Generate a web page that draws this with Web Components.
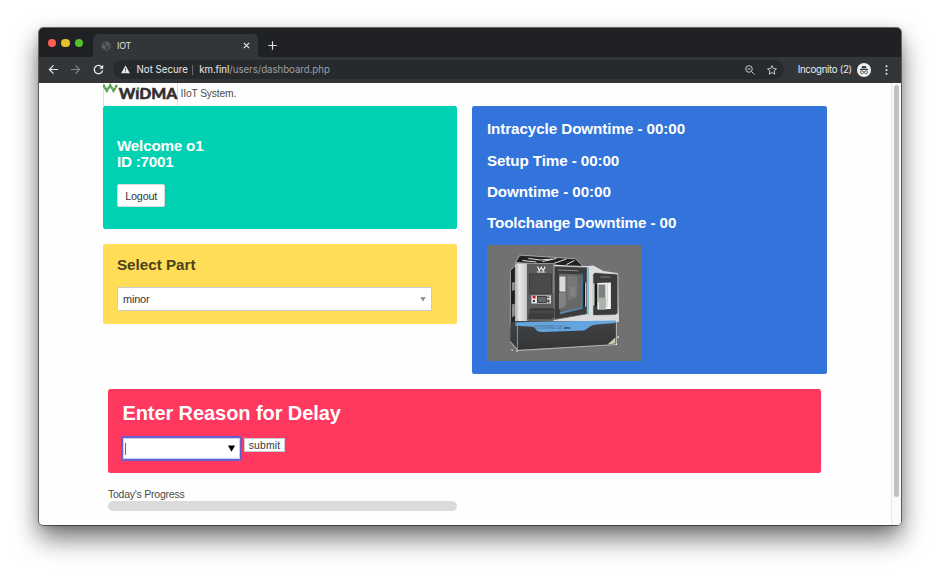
<!DOCTYPE html>
<html lang="en">
<head>
<meta charset="utf-8">
<title>IOT</title>
<style>
html,body{margin:0;height:100%;background:#fff;overflow:hidden}
body{font-family:"Liberation Sans",Arial,sans-serif;color:#4a4a4a}
</style>
</head>
<body>
<browser-window>
  <browser-tabs slot="chrome"></browser-tabs>
  <browser-toolbar slot="chrome"></browser-toolbar>
  <iot-dashboard></iot-dashboard>
</browser-window>
<script>
const define = (name, html, setup) => customElements.define(name, class extends HTMLElement {
  connectedCallback() {
    if (this.shadowRoot) return;
    const t = document.createElement('template');
    t.innerHTML = html;
    this.attachShadow({mode: 'open'}).appendChild(t.content.cloneNode(true));
    if (setup) setup(this);
  }
});

/* Single line of text tracked out or in to fill the width given in "w". */
define('fit-text', `<style>:host{display:block;white-space:nowrap;line-height:inherit}span{display:inline-block}</style><span><slot></slot></span>`, el => {
  const s = el.shadowRoot.querySelector('span');
  const fit = () => {
    const n = el.textContent.length, w = +el.getAttribute('w');
    s.style.letterSpacing = '0';
    s.style.letterSpacing = ((w - s.getBoundingClientRect().width) / n) + 'px';
  };
  fit();
  addEventListener('load', fit);
});

define('browser-window', `<style>
:host{display:flex;flex-direction:column;box-sizing:border-box;width:862.5px;height:497px;margin:28px 0 0 38.6px;border-radius:4px;overflow:hidden;background:#fefefe;
box-shadow:0 0 0 .7px rgba(25,25,25,.8),0 13px 26px rgba(0,0,0,.56),0 2px 10px rgba(0,0,0,.14)}
.view{flex:1;display:flex;min-height:0}
.page{flex:1}
.bar{width:10px;background:#fafafa;border-left:1px solid #e6e6e6;box-sizing:border-box;padding:2px 2px 0 2px}
.thumb{width:5px;height:412px;border-radius:3px;background:#c1c1c1}
</style><slot name="chrome"></slot><div class="view"><div class="page"><slot></slot></div><div class="bar"><div class="thumb"></div></div></div>`);

define('browser-tabs', `<style>
:host{display:flex;height:29px;background:#202124;font:9px Inter,Roboto,sans-serif;color:#dfe1e5;flex:none}
.dots{display:flex;gap:5.2px;padding:11px 0 0 9px;width:45px;box-sizing:border-box;flex:none}
.dots i{width:8.4px;height:8.4px;border-radius:50%;flex:none}
.tab{display:flex;align-items:center;width:165px;height:23px;margin:6px 0 0 9px;background:#323639;border-radius:5px 5px 0 0;box-sizing:border-box;padding:0 7px 0 8px}
.tab fit-text{margin-left:6.5px;flex:1}
svg{flex:none}
.tab>svg:last-child{margin-right:1px}
.plus{margin:12.5px 0 0 10.5px}
</style><div class="dots"><i style="background:#ff5f57"></i><i style="background:#e9bf2b"></i><i style="background:#54c22b"></i></div>
<div class="tab"><svg width="10" height="10" viewBox="0 0 10 10"><circle cx="5" cy="5" r="4.3" fill="#3d4144" stroke="#55595c" stroke-width=".9"/><path d="M1 3.5L3.5 4.2 4.8 6 4 8.8 2.8 7.2 1.2 6zM5 1l2.2.3L8.7 3.5 7.6 5 5.8 4.4 5 3zM7 6.3l1.5-.2L7 8.5z" fill="#5d6164"/></svg>
<fit-text w="13.8">IOT</fit-text>
<svg width="7" height="7" viewBox="0 0 7 7"><path d="M.8.8l5.4 5.4M6.2.8L.8 6.2" stroke="#e1e3e5" stroke-width="1.2"/></svg></div>
<svg class="plus" width="9" height="9" viewBox="0 0 9 9"><path d="M4.5.3v8.4M.3 4.5h8.4" stroke="#dfe1e5" stroke-width="1.2"/></svg>`);

define('browser-toolbar', `<style>
:host{display:flex;align-items:center;height:25.5px;background:#323639;font:9.7px Inter,Roboto,sans-serif;color:#e8eaed;flex:none;box-sizing:border-box;padding-left:9.6px}
svg{flex:none}
.url{display:flex;align-items:center;height:19px;width:670.9px;box-sizing:border-box;border-radius:10px;background:#272a2d;margin-left:9.6px;padding:0 7px 0 8px}
.sep{width:1px;height:10px;background:#686c70;margin:0 6px 0 4.5px}
.dim{color:#9aa0a6}.grow{flex:1}
</style>
<svg width="11" height="11" viewBox="0 0 11 11"><path d="M10 5.5H1.4M5.5 1.4L1.4 5.5l4.1 4.1" fill="none" stroke="#e8eaed" stroke-width="1.2"/></svg>
<svg style="margin-left:11px" width="11" height="11" viewBox="0 0 11 11"><path d="M1 5.5h8.6M5.5 1.4l4.1 4.1-4.1 4.1" fill="none" stroke="#85898c" stroke-width="1.1"/></svg>
<svg style="margin-left:11.5px" width="11" height="11" viewBox="0 0 11 11"><path d="M9 3.2A4.2 4.2 0 1 0 9.6 6.3" fill="none" stroke="#e8eaed" stroke-width="1.3"/><path d="M10.2.8v4H6.3z" fill="#e8eaed"/></svg>
<div class="url">
<svg width="9" height="9" viewBox="0 0 9 9"><path d="M4.5.6L8.9 8.3H.1z" fill="#e8eaed"/><path d="M4.5 3.2v2.5M4.5 6.3v1" stroke="#292c2f" stroke-width=".8"/></svg>
<fit-text w="51.2" style="margin-left:6.3px">Not Secure</fit-text><span class="sep"></span><fit-text w="30">km.finl</fit-text><fit-text w="100.5" class="dim">/users/dashboard.php</fit-text><span class="grow"></span>
<svg width="10" height="10" viewBox="0 0 10 10"><circle cx="4" cy="4" r="3.3" fill="none" stroke="#c2c5c8"/><path d="M2.4 4h3.2M6.4 6.4l3.2 3.2" stroke="#c2c5c8"/></svg>
<svg style="margin-left:12px" width="10" height="10" viewBox="0 0 10 10"><path d="M5 .6l1.3 3 3.2.3-2.4 2.1.7 3.2L5 7.5 2.2 9.2l.7-3.2L.5 3.9l3.2-.3z" fill="none" stroke="#d4d6d8" stroke-width=".9"/></svg>
</div>
<fit-text w="54" style="margin-left:13.5px">Incognito (2)</fit-text>
<svg style="margin-left:5.5px" width="14" height="14" viewBox="0 0 14 14"><circle cx="7" cy="7" r="7" fill="#f1f3f4"/><path d="M5 2.9h4l.7 2.6H4.3zM2.8 6.1h8.4v.9H2.8z" fill="#3c4043"/><g fill="none" stroke="#3c4043" stroke-width=".8"><circle cx="4.9" cy="9.2" r="1.5"/><circle cx="9.1" cy="9.2" r="1.5"/><path d="M6.4 8.9q.6-.4 1.2 0"/></g></svg>
<svg style="margin-left:13.5px" width="3" height="10" viewBox="0 0 3 10"><circle cx="1.5" cy="1.3" r="1.05" fill="#e8eaed"/><circle cx="1.5" cy="5" r="1.05" fill="#e8eaed"/><circle cx="1.5" cy="8.7" r="1.05" fill="#e8eaed"/></svg>`);

define('widma-logo', `<style>:host{display:block;width:75px;height:23px;border:1px solid #dedede;border-width:0 1px;box-sizing:border-box}svg{display:block;margin-left:-1px}</style>
<svg width="75" height="23" viewBox="0 0 75 23"><g fill="none" stroke="#519b4b"><path d="M.4 1.8L3.8 7.8 7.2 2.2 10.6 7.8 14 1.8" stroke-width="2.3" stroke-dasharray="2.6 .35"/></g>
<text x="15.8" y="16.2" textLength="58.6" lengthAdjust="spacingAndGlyphs" font-family="Lato,sans-serif" font-weight="900" font-size="15.2" fill="#332f30" stroke="#332f30" stroke-width=".5">WiDMA</text><rect x="32.4" y="3.2" width="5.4" height="3.8" fill="#fefefe"/><circle cx="35" cy="5.4" r="1.5" fill="#55a94d"/></svg>`);

define('note-card', `<style>:host{display:block;border-radius:2.5px;box-sizing:border-box;padding:0 14.4px;color:#fff}</style><slot></slot>`);

define('part-select', `<style>:host{display:flex;align-items:center;box-sizing:border-box;width:315.5px;height:24px;background:#fff;border:1px solid #ccc;padding:1px 5px;font-size:10.9px;line-height:14px;color:#333}fit-text{flex:1}</style>
<fit-text w="26.5"></fit-text><svg width="6" height="5" viewBox="0 0 6 5"><path d="M.3.3h5.4L3 4.6z" fill="#888"/></svg>`, el => {
  el.shadowRoot.querySelector('fit-text').textContent = el.getAttribute('value');
});

define('reason-input', `<style>:host{display:flex;align-items:center;box-sizing:border-box;width:121px;height:25px;background:#fff;border:2px solid #6b5fce;border-radius:2px;box-shadow:inset 0 0 0 1px #c4d2f5;padding:1px 5px 0 1.5px;justify-content:space-between}i{width:1px;height:12px;background:#666}</style>
<i></i><svg width="7" height="7" viewBox="0 0 7 7"><path d="M0 .6h7L3.5 6.7z" fill="#000"/></svg>`);

define('cnc-machine', `<style>:host{display:block;width:154.5px;height:116px}svg{display:block}</style>
<svg width="154.5" height="116" viewBox="6.6 5.5 154.5 116" preserveAspectRatio="none">
<defs><linearGradient id="w"><stop stop-color="#a9abac"/><stop offset=".35" stop-color="#e7e8e8"/><stop offset="1" stop-color="#c5c6c7"/></linearGradient>
<linearGradient id="b" x2="0" y2="1"><stop stop-color="#414243"/><stop offset="1" stop-color="#343536"/></linearGradient></defs>
<rect x="6" y="5" width="157" height="118" fill="#717171"/>
<path d="M35 23L39.5 15.7 95 19.3l8 7.7L98 28 72 25z" fill="#202122" stroke="#ddd" stroke-width=".6"/>
<path d="M48 19l12 1.5 12-1M62 22l14-3M73 24l13-4.5M86 25l8-4M42 21l14 1.5" fill="none" stroke="#e2e2e2" stroke-width="1"/>
<path d="M30 31l8-8v60L30 88z" fill="#1e1f20" stroke="#c4c4c4" stroke-width=".7"/><path d="M31.5 43l3-.5v8l-3 1zM31.5 65l3-1v12l-3 2z" fill="#8b8c8d"/>
<path d="M34.5 24H47v58H34.5z" fill="url(#w)"/>
<path d="M73 26l34 1 6-.5 10 5.5 14 2 1 48-65 1z" fill="#ddddde" stroke="#eee" stroke-width=".8"/>
<path d="M46.5 23.5h27V81h-27z" fill="#5c5d5e"/><path d="M46 24h27M73.5 24v30" stroke="#aaa" stroke-width=".7"/>
<path d="M74 27l32.5 1v46.5L74 80z" fill="#3a3b3c" stroke="#666" stroke-width=".7"/>
<path d="M78.5 34l22.5 1v34l-21 6z" fill="#666869"/><path d="M79 37h6v15h-6z" fill="#dadada"/><path d="M87 36l10 1v20l-10 5z" fill="#777"/><path d="M78.5 53h7v13l-7 4zM90 47h5v10h-5z" fill="#828282"/>
<path d="M100.5 34q1.2 0 1.2 2l-.2 33-22 4.5" fill="none" stroke="#489de0" stroke-width="1"/>
<path d="M103.3 43h1.8v23h-1.8z" fill="#111"/><path d="M105.3 43v24" stroke="#eee" stroke-width="1"/>
<path d="M107.8 28v48" stroke="#57acc0" stroke-width="1"/>
<rect x="49" y="34.5" width="22" height="19.5" fill="#494a4b" stroke="#303132" stroke-width=".6"/>
<path d="M57.2 27l1.6 4.2L60.9 27.8l2 3.4L64.8 27" fill="none" stroke="#eee" stroke-width="1.2"/><text x="56.7" y="33.6" textLength="8.5" lengthAdjust="spacingAndGlyphs" font-family="Inter,sans-serif" font-size="2.3" font-weight="700" fill="#ddd">WIDMA</text>
<rect x="51" y="56" width="19.5" height="8" fill="#e5e5e5"/><rect x="57" y="57" width="9" height="6" fill="#65686a" stroke="#262626" stroke-width=".8"/><circle cx="53.7" cy="57.6" r="1.7" fill="#dc1825"/><path d="M52.5 60.5h2v2h-2zM67 57h2v1.5h-2zM67 60h2v3h-2z" fill="#333"/>
<path d="M49 69.5l5-1h19l1 1v8.5l-4 1.5H48z" fill="#3c3d3e"/><path d="M48.5 72.5H73" stroke="#606162" stroke-width=".8"/>
<path d="M46 81.5h27.5L106 75l32 1.5V82l-92 3z" fill="#d9dadb"/>
<path d="M112.5 34.5l2-1.5 22 1.5 1 1v38l-2 2-23 .5z" fill="#3a3b3c" stroke="#ddd" stroke-width=".7"/>
<path d="M117 43.5l13.5-.5v26.5l-13.5.5z" fill="#f4f5f2"/><path d="M118 45h7v17h-7z" fill="#7d827e"/><path d="M118.5 58h7v12h-7z" fill="#aeb2ad"/><path d="M126.3 44h1v24h-1z" fill="#c3cdbf"/>
<path d="M113.8 45h2.6v21h-2.6z" fill="#141414"/><path d="M113.5 44v22" stroke="#fff" stroke-width="1.1"/><path d="M137.5 39v32" stroke="#8c8c8c"/>
<path d="M120 37.5h10" stroke="#b0b0b0" stroke-width=".6"/>
<path d="M78 30.5l20 .8" stroke="#aaa" stroke-width="1" stroke-dasharray="1.4 .5"/>
<path d="M30 83l6-1.5L135.5 82v23L38 110.3 30 102z" fill="url(#b)"/>
<path d="M35 82.7L135 81v2.6l-18 1.3q-6 .3-9 3.4l-4 2.7-42 1.4q-5 .2-7-3l-2-2.2-18-1z" fill="#64a5df"/>
<path d="M37 85v25" stroke="#5f9fd8" stroke-width="1"/>
<text x="54" y="89.6" textLength="28" lengthAdjust="spacingAndGlyphs" font-family="Inter,sans-serif" font-style="italic" font-size="4.2" fill="#49617a">ECOGRIND SX</text><text x="83.5" y="89.2" font-family="Inter,sans-serif" font-size="2.6" font-weight="800" fill="#202d3a">linea</text>
<path d="M127 105l8-7v6z" fill="#c6cfac"/>
<path d="M30 102l7.5 9L136 105V82" fill="none" stroke="#ccc" stroke-width=".8"/><path d="M31 110.5h1.5M36.5 111v1.2M137 97.7h1.5M136 104v1.5" stroke="#fff" stroke-width="1.2"/>
</svg>`);

define('iot-dashboard', `<style>
:host{display:flex;flex-direction:column;padding-left:64px;font-size:10.5px}
.top{display:flex;height:23.5px;align-items:flex-start}
.top fit-text{margin-left:3px;line-height:14px;padding-top:4px;font-size:10.3px}
.cols{display:grid;grid-template-columns:354.5px 355px;column-gap:15.4px;align-items:start}
.left{display:grid;row-gap:15px}
.teal{background:#00d1b2;height:123px;padding-top:31.5px}
.h{font-weight:700;font-size:15.2px;line-height:16.5px}
button{display:block;font:10.9px "Liberation Sans",Arial,sans-serif;color:#363636;background:#fff;border:1px solid #dbdbdb;border-radius:2px;padding:0}
.logout{width:48.5px;height:23px;margin-top:13.5px;padding-left:7.2px;text-align:left}
.yellow{background:#ffdd57;height:79.5px;padding-top:13.4px}
.yellow .h{color:#4b431c}
part-select{margin-top:13.6px}
.blue{background:#3273dc;height:268px;padding-top:15.4px}
.blue .h{height:31.25px}
cnc-machine{margin-top:-1px}
.red{background:#ff3860;width:713px;height:84px;margin:14.7px 0 0 5.4px;padding-top:11px}
.red .big{font-size:20px;line-height:26px;font-weight:700}
.form{display:flex;gap:1.5px;margin:10.3px 0 0 -1.2px;align-items:flex-start}
.submit{width:41px;height:14px;margin-top:2.5px;padding-left:4px;line-height:11px;font-size:10.4px;text-align:left;border-radius:0;border-color:#ccc}
.prog{margin:14.9px 0 0 5.4px}
.prog fit-text{line-height:12.5px}
.track{width:349px;height:10px;border-radius:5px;background:#dbdbdb;margin-top:1px}
</style>
<div class="top"><widma-logo></widma-logo><fit-text w="55.5">IIoT System.</fit-text></div>
<div class="cols"><div class="left">
<note-card class="teal"><fit-text class="h" w="86.5">Welcome o1</fit-text><fit-text class="h" w="56.5">ID :7001</fit-text><button class="logout"><fit-text w="32">Logout</fit-text></button></note-card>
<note-card class="yellow"><fit-text class="h" w="78.5">Select Part</fit-text><part-select value="minor"></part-select></note-card>
</div>
<note-card class="blue"><fit-text class="h" w="198.2">Intracycle Downtime - 00:00</fit-text><fit-text class="h" w="132.3">Setup Time - 00:00</fit-text><fit-text class="h" w="124">Downtime - 00:00</fit-text><fit-text class="h" w="189.5">Toolchange Downtime - 00</fit-text><cnc-machine></cnc-machine></note-card></div>
<note-card class="red"><fit-text class="big" w="218.5">Enter Reason for Delay</fit-text><div class="form"><reason-input></reason-input><button class="submit"><fit-text w="31.5">submit</fit-text></button></div></note-card>
<div class="prog"><fit-text w="76.5">Today's Progress</fit-text><div class="track"></div></div>`);
</script>
</body>
</html>
